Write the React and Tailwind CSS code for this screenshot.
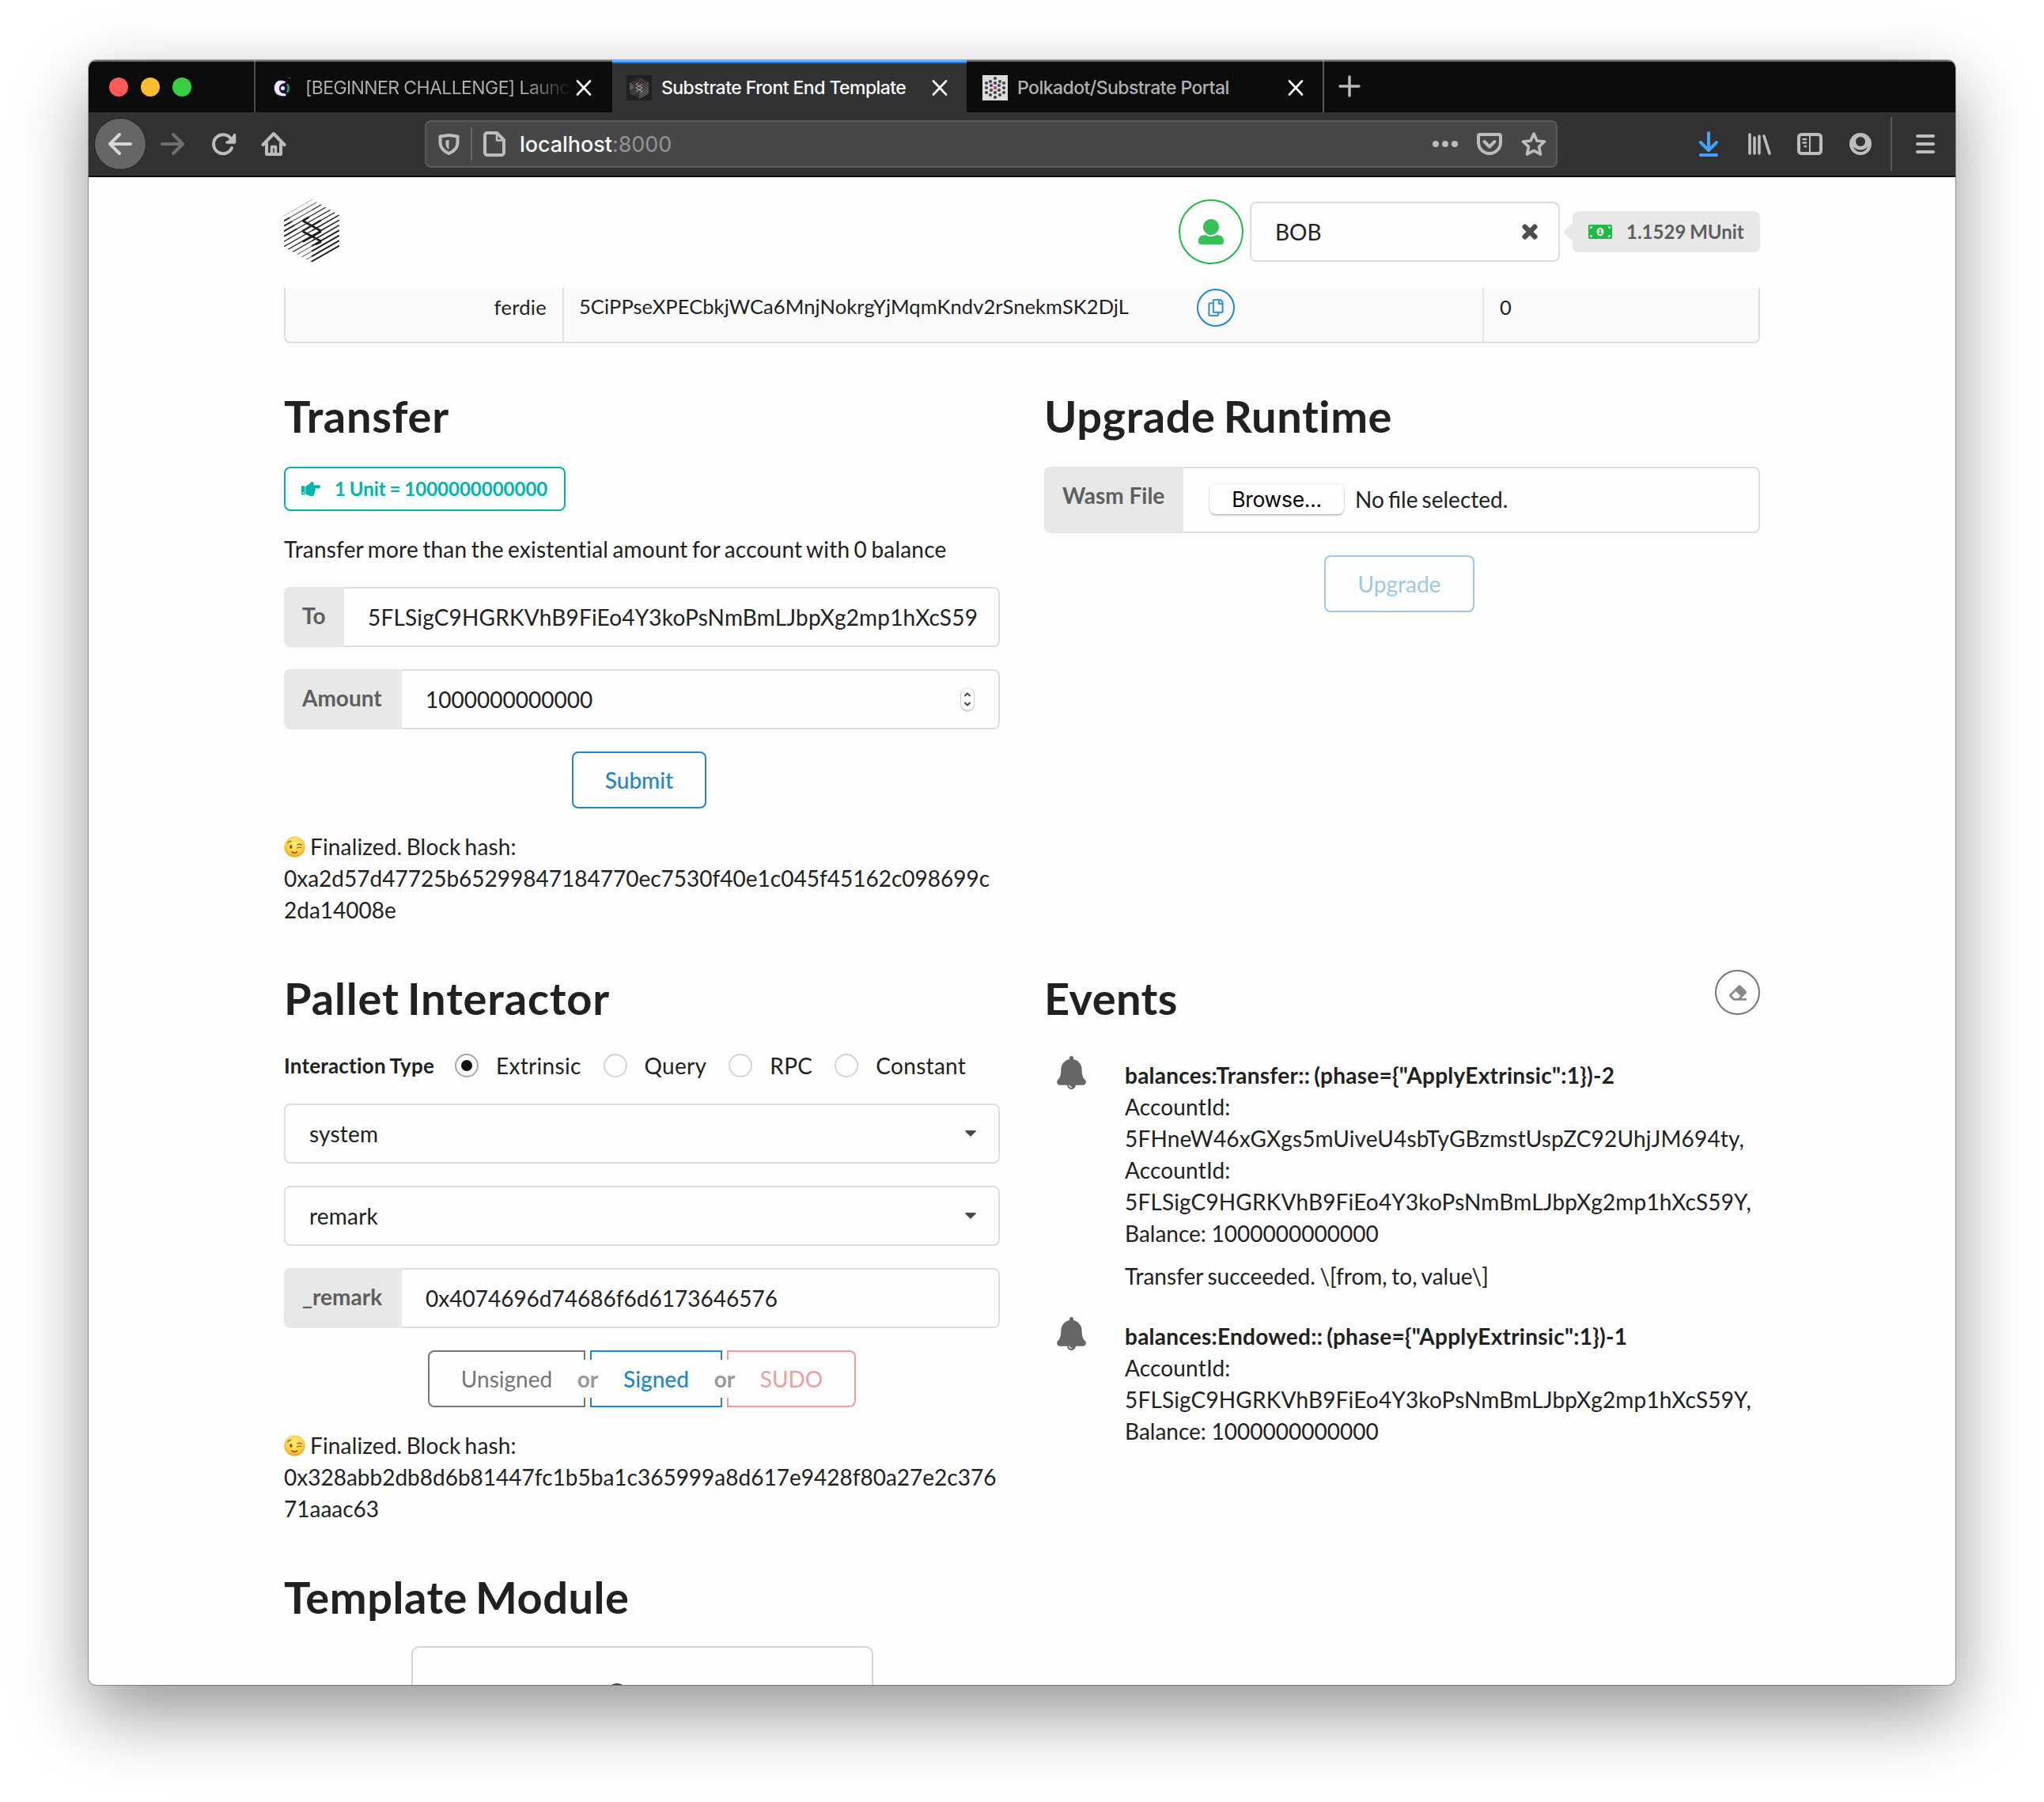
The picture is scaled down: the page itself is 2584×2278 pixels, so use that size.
import React from "react";
import { FaTimes, FaMoneyBillAlt, FaRegCopy, FaHandPointRight, FaEraser } from "react-icons/fa";

const HATCH = Array.from({ length: 13 }, (_, k) => 20.7 + k * 6.5);

function SubstrateMark({ id, color = "#1e1e1e", className }) {
  return (
    <svg viewBox="0 0 70 80" className={className}>
      <defs>
        <clipPath id={id}>
          <path d="M35 0 70 20V60L35 80 0 60V20Z" />
        </clipPath>
      </defs>
      <g clipPath={"url(#" + id + ")"} stroke={color}>
        {HATCH.map((c, k) => (
          <g key={k}>
            <path
              d={"M0 " + c + "L35 " + (c - 20)}
              strokeWidth={k === 0 ? 0.7 : 1.2}
              opacity={k === 0 ? 0.5 : k < 3 ? 0.7 : k > 8 ? 0.6 : 1}
            />
            <path
              d={"M35 " + (c - 20) + "L70 " + (c - 40)}
              strokeWidth={k > 8 ? 2 : k > 5 ? 1.6 : 1.2}
              opacity={k < 2 ? 0.6 : 1}
            />
            {k > 0 && k < 5 && (
              <path d={"M0 " + c + "L" + (4 + k * 3) + " " + (c - (4 + k * 3) * 0.571)} strokeWidth="1.8" />
            )}
          </g>
        ))}
      </g>
      <g fill="none" stroke={color} strokeWidth="2.6" strokeLinecap="round" strokeLinejoin="round">
        <path d="M30.500 23.200 24.500 26.500V27.500L46 39.500V41L24.500 53" />
        <path d="M46 27 24.500 39.500V41L46 52.500V54L40.500 56.700" />
      </g>
    </svg>
  );
}

function CloseX() {
  return (
    <svg viewBox="0 0 20 20" className="h-5 w-5 shrink-0" stroke="#fff" strokeWidth="2.6" strokeLinecap="round">
      <path d="M2 1.500 18 18.500M18 1.500 2 18.500" />
    </svg>
  );
}

function PolkadotFavicon() {
  const dots = [
    [16, 4], [10, 8], [22, 8], [16, 10], [5, 10], [27, 10], [11, 13], [21, 13], [5, 16], [27, 16],
    [11, 19], [21, 19], [16, 22], [5, 22], [27, 22], [10, 25], [22, 25], [16, 28],
  ];
  return (
    <svg viewBox="0 0 32 32" className="h-8 w-8 shrink-0">
      <rect width="32" height="32" fill="#dcdcdc" />
      {dots.map(([x, y]) => (
        <circle key={x + "-" + y} cx={x} cy={y} r="2.100" fill="#444" />
      ))}
      <circle cx="16" cy="16" r="2.200" fill="#d6339a" />
    </svg>
  );
}

function TabBar() {
  return (
    <div className="relative flex h-[66px] bg-[#0c0c0d] font-['Inter',sans-serif] text-[23px] font-medium tracking-[-0.55px]">
      <span className="absolute inset-x-0 top-0 h-[2px] bg-white/40" />
      <div className="flex w-[211px] items-center gap-4 border-r-2 border-[#4a4a4b] pl-[26px] pt-[1px]">
        <span className="h-6 w-6 rounded-full bg-[#ff5a57]" />
        <span className="h-6 w-6 rounded-full bg-[#ffbe30]" />
        <span className="h-6 w-6 rounded-full bg-[#36d042]" />
      </div>
      <div className="flex w-[451px] items-center justify-between pl-[20px] pr-[26px] pt-1">
        <div className="flex items-center">
          <svg viewBox="0 0 26 28" className="mr-[17px] h-7 w-[26px] shrink-0">
            <path d="M12 4C6 4 3 9 3 14.500S7 25 13 25h6v-4l-5-1a5.500 5.500 0 0 1-3-5.500c0-3 2-5 5-5.500l4-2c-2-2-4-3-8-3Z" fill="#ececf2" stroke="#1d1048" strokeWidth="1.500" />
            <circle cx="14.500" cy="14.500" r="3.500" fill="#ececf2" stroke="#251155" strokeWidth="2" />
            <path d="M20 9c2 3.500 2 7.500 0 11" fill="none" stroke="#17a67c" strokeWidth="2.500" />
            <circle cx="23" cy="1.500" r=".8" fill="#17a67c" />
          </svg>
          <span className="whitespace-nowrap bg-linear-to-r from-[#b1b1b3] from-83% to-[#161617] bg-clip-text font-normal tracking-[-0.6px] text-transparent">
            [BEGINNER CHALLENGE] Launc
          </span>
        </div>
        <CloseX />
      </div>
      <div className="flex w-[448px] items-center border-t-4 border-[#0a84ff] bg-[#323234] pl-[18px] pr-6 text-[#f9f9fa]">
        <div className="mr-3 h-8 w-8 shrink-0 bg-[#231f20] p-[2px]">
          <SubstrateMark id="mark-tab" color="#b8b8b8" className="h-7 w-7" />
        </div>
        <div className="flex-1 whitespace-nowrap">Substrate Front End Template</div>
        <CloseX />
      </div>
      <div className="flex w-[452px] items-center border-r-2 border-[#5a5a5b] pl-5 pr-6 pt-1 text-[#b1b1b3]">
        <PolkadotFavicon />
        <div className="ml-3 flex-1 whitespace-nowrap">Polkadot/Substrate Portal</div>
        <CloseX />
      </div>
      <svg viewBox="0 0 28 28" className="ml-[18px] mt-[19px] h-7 w-7" stroke="#b8b8ba" strokeWidth="3.500" strokeLinecap="round">
        <path d="M14 2v24M2 14h24" />
      </svg>
    </div>
  );
}

function Ico({ className = "", children }) {
  return (
    <svg
      viewBox="0 0 32 32"
      fill="none"
      stroke="#bdbdbe"
      strokeWidth="4"
      strokeLinecap="round"
      strokeLinejoin="round"
      className={"h-8 w-8 shrink-0 " + className}
    >
      {children}
    </svg>
  );
}

function ToolBar() {
  return (
    <div className="flex h-[82px] items-center border-b-2 border-[#0c0c0d] bg-[#323234] pl-2">
      <div className="flex h-16 w-16 items-center justify-center rounded-full bg-[#666667] ring-1 ring-[#252526]">
        <Ico>
          <path d="M29 16H3M15 4 3 16 15 28" stroke="#d6d6d7" />
        </Ico>
      </div>
      <Ico className="ml-[18px]">
        <path d="M3 16H29M17 4 29 16 17 28" stroke="#6f6f70" />
      </Ico>
      <Ico className="ml-[33px]">
        <path d="M25 9.500A12 12 0 1 0 26 21" />
        <path d="M29 4V15H18Z" fill="#bdbdbe" stroke="none" />
        <path d="M29.500 4.500V14H20" strokeWidth="3.500" />
      </Ico>
      <Ico className="ml-[31px]">
        <path d="M2.500 17 16 3 29.500 17" />
        <path d="M7 15V29H25V15" />
        <path d="M13.500 28V19.500H18.500V28" strokeWidth="3.500" />
      </Ico>
      <div className="ml-[175px] flex h-[60px] w-[1432px] items-center rounded-lg border-2 border-[#5a5a5c] bg-[#474749] pl-[13px] pr-3">
        <Ico>
          <path d="M4.500 6.500C8 6 12 5 15.500 5s7.500 1 11 1.500V14c0 7-4 11-11 14-7-3-11-7-11-14Z" />
          <path d="M15.500 11v12c-3-1.500-4-4.500-4-7.500v-4Z" fill="#bdbdbe" stroke="none" />
        </Ico>
        <span className="ml-[11px] h-[42px] w-[2px] bg-[#65666c]" />
        <Ico className="ml-[13px]">
          <path d="M6 2H18L27 11V27a3 3 0 0 1-3 3H6a3 3 0 0 1-3-3V5a3 3 0 0 1 3-3Z" />
          <path d="M18 3v8.500h8" strokeWidth="2.500" />
        </Ico>
        <div className="ml-[15px] flex-1 pt-[2px] font-['Inter',sans-serif] text-[27px] font-medium tracking-[-0.05px] text-[#f9f9fa]">
          localhost<span className="font-normal text-[#949495]">:8000</span>
        </div>
        <Ico>
          <g fill="#bdbdbe" stroke="none">
            <circle cx="4" cy="16" r="4" />
            <circle cx="16" cy="16" r="4" />
            <circle cx="28" cy="16" r="4" />
          </g>
        </Ico>
        <Ico className="ml-6">
          <path d="M4 4H28a2 2 0 0 1 2 2V14a14 14 0 0 1-28 0V6a2 2 0 0 1 2-2Z" />
          <path d="M9.500 13 16 19.500 22.500 13" />
        </Ico>
        <Ico className="ml-6">
          <path d="m16 3 4 9 9.500 1-7 6.500 2 9.500L16 24.300 7.500 29l2-9.500-7-6.500 9.500-1Z" strokeWidth="3.600" />
        </Ico>
      </div>
      <Ico className="ml-[175px]">
        <g stroke="#45a1ff">
          <path d="M16 2V23M6 14 16 24 26 14M6 30H26" />
        </g>
      </Ico>
      <Ico className="ml-8">
        <path d="M4 4V28M10 8V28M16 6V28M22 6 29 28" strokeWidth="3.600" />
      </Ico>
      <Ico className="ml-8">
        <rect x="2" y="4" width="28" height="24" rx="3.500" />
        <path d="M16 4V28" strokeWidth="2" />
        <path d="M7.500 10H11M7.500 14.500H11M9.500 19H11" strokeWidth="2.400" />
      </Ico>
      <Ico className="ml-8">
        <circle cx="16" cy="16" r="14" fill="#bdbdbe" stroke="none" />
        <circle cx="16" cy="13" r="6" fill="#323234" stroke="none" />
        <path d="M7 19.500C9 25 13 26 16 26s7-1 9-6.500C22 22.500 19 23.500 16 23.500s-6-1-9-4Z" fill="#323234" stroke="none" />
      </Ico>
      <span className="ml-[22px] h-[68px] w-[2px] bg-[#59595a]" />
      <Ico className="ml-[26px]">
        <path d="M6 6H26M6 16H26M6 26H26" />
      </Ico>
    </div>
  );
}

function PageHeader() {
  return (
    <header className="flex h-[140px] items-start justify-between pt-7">
      <SubstrateMark id="mark-header" className="h-20 w-[70px]" />
      <div className="flex items-center">
        <span className="flex h-[82px] w-[82px] items-center justify-center rounded-full border-[2.5px] border-[#21ba45]">
          <svg viewBox="0 0 512 512" className="h-8 w-8 fill-[#37c058]">
            <path d="M256 0c88.366 0 160 71.634 160 160s-71.634 160-160 160S96 248.366 96 160 167.634 0 256 0zm183.283 333.821l-71.313-17.828c-74.923 53.890-165.738 41.864-223.940 0l-71.313 17.828C29.981 344.505 0 382.903 0 426.955V464c0 26.510 21.490 48 48 48h416c26.510 0 48-21.490 48-48v-37.045c0-44.052-29.981-82.450-72.717-93.134z" />
          </svg>
        </span>
        <div className="ml-2 flex h-[76px] w-[392px] items-center justify-between rounded-lg border-2 border-[#dededf] pl-[30px] pr-[23px]">
          <span>BOB</span>
          <FaTimes className="h-[26px] w-[26px] overflow-visible text-[#4c4c4c]" stroke="#4c4c4c" strokeWidth="30" />
        </div>
        <div className="relative ml-4 flex h-[52px] w-[237px] items-center rounded-lg bg-[#e8e8e8] pl-5 text-[24px] font-bold text-[#5e5e5e]">
          <span className="absolute -left-[8px] top-[17.500px] h-[17px] w-[17px] rotate-45 bg-[#e8e8e8]" />
          <FaMoneyBillAlt className="relative h-6 w-[30px] text-[#21ba45]" />
          <span className="ml-[18px] whitespace-nowrap [word-spacing:-1px]">1.1529 MUnit</span>
        </div>
      </div>
    </header>
  );
}

function BalanceRow() {
  return (
    <div className="flex h-[70px] rounded-b-lg border-x-2 border-b-2 border-[#dededf] bg-[#fafafb] text-[25.500px]">
      <div className="w-[352px] border-r-2 border-[#e2e2e3] pr-5 pt-[4px] text-right tracking-[0.3px]">ferdie</div>
      <div className="flex w-[1163px] border-r-2 border-[#e2e2e3] pl-[19px] pt-[1px]">
        <span className="w-[781px] pt-[2px] tracking-[0.080px]">5CiPPseXPECbkjWCa6MnjNokrgYjMqmKndv2rSnekmSK2DjL</span>
        <span className="flex h-12 w-12 items-center justify-center rounded-full border-2 border-[#2185d0]">
          <FaRegCopy className="h-[22px] w-[20px] text-[#3b93d8]" />
        </span>
      </div>
      <div className="pl-[20px] pt-[4px]">0</div>
    </div>
  );
}

function Heading({ children, tracking }) {
  return (
    <h1 className={"whitespace-nowrap text-[56px] font-bold leading-[72px] [word-spacing:-4px] " + tracking}>
      {children}
    </h1>
  );
}

function LabeledField({ label, labelWidth, tall, children }) {
  return (
    <div className={"mt-7 flex " + (tall ? "h-[84px]" : "h-[76px]")}>
      <div className={"shrink-0 rounded-l-lg bg-[#e8e8e8] pl-[23px] pt-[16px] font-bold text-[#5e5e5e] " + labelWidth}>
        {label}
      </div>
      <div className={"flex flex-1 items-center rounded-r-lg border-2 border-l-0 border-[#dededf] pl-[30px] " + (tall ? "pb-[3px]" : "")}>
        {children}
      </div>
    </div>
  );
}

function Select({ value }) {
  return (
    <div className="mt-7 flex h-[76px] items-center justify-between rounded-lg border-2 border-[#dededf] pl-[30px] pr-[28px]">
      <span className="tracking-[0.2px]">{value}</span>
      <svg viewBox="0 0 14 8" className="h-2 w-[14px] fill-[#4a4a4a]">
        <path d="M1 0H13L14 1 7 8 0 1Z" />
      </svg>
    </div>
  );
}

function Wink() {
  return (
    <svg viewBox="0 0 26 26" className="mr-[6px] inline-block h-[27px] w-[27px] align-[-3px]">
      <defs>
        <radialGradient id="face" cx=".5" cy=".35" r=".65">
          <stop offset="0" stopColor="#fff07a" />
          <stop offset=".65" stopColor="#fdd043" />
          <stop offset="1" stopColor="#f0a125" />
        </radialGradient>
      </defs>
      <circle cx="13" cy="13" r="12.700" fill="url(#face)" />
      <ellipse cx="8.500" cy="13" rx="1.500" ry="2.100" fill="#7a4a12" />
      <path d="M4.500 8.500c1-2 2.500-2.500 4-2.300M16 10.500c2-1 4-.8 5.500.3M16 14.500c1.500-1.200 3.500-1.200 5-.3" fill="none" stroke="#8a5614" strokeWidth="1.100" strokeLinecap="round" />
      <path d="M9.500 19c2 2 5 2 6.500 0" fill="none" stroke="#7a4a12" strokeWidth="1.300" strokeLinecap="round" />
    </svg>
  );
}

function Status({ lines }) {
  return (
    <div className="mt-7 whitespace-nowrap">
      <div className="h-10 tracking-[0.15px] [word-spacing:-2px]">
        <Wink />
        Finalized. Block hash:
      </div>
      {lines.map((l) => (
        <div key={l}>{l}</div>
      ))}
    </div>
  );
}

function Transfer() {
  return (
    <section>
      <Heading tracking="tracking-[0.700px]">Transfer</Heading>
      <div className="mt-7 flex h-14 w-[356px] items-center rounded-lg border-2 border-[#00b5ad] pl-5 text-[24px] font-bold text-[#00b5ad]">
        <FaHandPointRight className="h-6 w-6" />
        <span className="ml-[18px] whitespace-nowrap [word-spacing:-1px]">1 Unit = 1000000000000</span>
      </div>
      <p className="mt-7 tracking-[0.2px] [word-spacing:-2px]">
        Transfer more than the existential amount for account with 0 balance
      </p>
      <LabeledField label="To" labelWidth="w-[76px]">
        <span className="tracking-[0.18px]">5FLSigC9HGRKVhB9FiEo4Y3koPsNmBmLJbpXg2mp1hXcS59</span>
      </LabeledField>
      <LabeledField label="Amount" labelWidth="w-[149px]">
        <span className="flex-1">1000000000000</span>
        <svg viewBox="0 0 16 28" className="mr-[31px] h-7 w-4 rounded-full bg-white shadow-[0_1px_2px_rgba(0,0,0,.25),0_0_0_1px_rgba(0,0,0,.12)]" fill="none" stroke="#444" strokeWidth="2" strokeLinecap="round" strokeLinejoin="round">
          <path d="M5 9.500 8 6.500l3 3M5 18.500 8 21.500l3-3" />
        </svg>
      </LabeledField>
      <div className="mt-7 flex justify-center pr-[7px]">
        <button className="h-[72px] w-[170px] rounded-lg border-2 border-[#2185d0] font-medium text-[#2185d0]">Submit</button>
      </div>
      <Status lines={["0xa2d57d47725b65299847184770ec7530f40e1c045f45162c098699c", "2da14008e"]} />
    </section>
  );
}

function UpgradeRuntime() {
  return (
    <section>
      <Heading tracking="tracking-[0.550px]">Upgrade Runtime</Heading>
      <LabeledField label="Wasm File" labelWidth="w-[176px]" tall>
        <span className="ml-[3px] flex h-[38px] w-[170px] items-center justify-center rounded-lg bg-white font-['Inter',sans-serif] text-[26.500px] tracking-[-0.3px] text-black shadow-[0_2px_2px_rgba(0,0,0,.2),0_0_0_1px_rgba(0,0,0,.08)]">
          Browse...
        </span>
        <span className="ml-[14px] [word-spacing:-2px]">No file selected.</span>
      </LabeledField>
      <div className="mt-7 flex justify-center pr-[7px]">
        <button className="h-[72px] w-[190px] rounded-lg border-2 border-[#9bc8ea] text-[#9bc8ea]">Upgrade</button>
      </div>
    </section>
  );
}

function Radio({ label, checked }) {
  return (
    <div className="mr-7 flex items-center">
      <span className={"flex h-[30px] w-[30px] items-center justify-center rounded-full border-2 " + (checked ? "border-[#a8a8a8]" : "border-[#d4d4d5]")}>
        {checked && <span className="h-[14px] w-[14px] rounded-full bg-[#111]" />}
      </span>
      <span className="ml-[22px] tracking-[0.3px]">{label}</span>
    </div>
  );
}

function Or() {
  return (
    <div className="relative w-[6px] shrink-0">
      <span className="absolute -left-[21px] top-3 flex h-12 w-12 items-center justify-center rounded-full font-bold text-[#999]">
        <span className="absolute left-[10px] h-12 w-7 bg-[#fefefe]" />
        <span className="relative">or</span>
      </span>
    </div>
  );
}

function PalletInteractor() {
  return (
    <section>
      <Heading tracking="tracking-[0.850px]">Pallet Interactor</Heading>
      <div className="mt-7 flex h-[41px] items-center whitespace-nowrap">
        <span className="w-[216px] text-[26px] font-bold tracking-[0.2px] [word-spacing:-1px]">Interaction Type</span>
        <Radio label="Extrinsic" checked />
        <Radio label="Query" />
        <Radio label="RPC" />
        <Radio label="Constant" />
      </div>
      <Select value="system" />
      <Select value="remark" />
      <LabeledField label="_remark" labelWidth="w-[149px]">
        0x4074696d74686f6d6173646576
      </LabeledField>
      <div className="mt-7 flex h-[72px] justify-center">
        <button className="w-[199px] rounded-l-lg border-2 border-[#767676] text-[#767676]">Unsigned</button>
        <Or />
        <button className="w-[167px] border-2 border-[#2185d0] font-medium text-[#2185d0]">Signed</button>
        <Or />
        <button className="w-[163px] rounded-r-lg border-2 border-[#f09c9c] text-[#f09c9c]">SUDO</button>
      </div>
      <Status lines={["0x328abb2db8d6b81447fc1b5ba1c365999a8d617e9428f80a27e2c376", "71aaac63"]} />
    </section>
  );
}

const EVENTS = [
  {
    title: 'balances:Transfer:: (phase={"ApplyExtrinsic":1})-2',
    lines: [
      "AccountId:",
      "5FHneW46xGXgs5mUiveU4sbTyGBzmstUspZC92UhjJM694ty,",
      "AccountId:",
      "5FLSigC9HGRKVhB9FiEo4Y3koPsNmBmLJbpXg2mp1hXcS59Y,",
    ],
    balance: "Balance: 1000000000000",
    note: "Transfer succeeded. \\[from, to, value\\]",
  },
  {
    title: 'balances:Endowed:: (phase={"ApplyExtrinsic":1})-1',
    lines: ["AccountId:", "5FLSigC9HGRKVhB9FiEo4Y3koPsNmBmLJbpXg2mp1hXcS59Y,"],
    balance: "Balance: 1000000000000",
  },
];

function Events() {
  return (
    <section>
      <div className="flex justify-between">
        <Heading tracking="tracking-[0.400px]">Events</Heading>
        <span className="flex h-[57px] w-[57px] items-center justify-center rounded-full border-2 border-[#767676]">
          <FaEraser className="h-[22px] w-[22px] text-[#888]" />
        </span>
      </div>
      <div className="mt-[41px] flex flex-col gap-9">
        {EVENTS.map((e) => (
          <div key={e.title} className="flex">
            <svg viewBox="0 0 448 512" className="-mt-[4px] ml-4 mr-[49px] h-[42px] w-[37px] shrink-0 fill-[#666]">
              <path d="M433.884 366.059C411.634 343.809 384 316.118 384 208c0-79.394-57.831-145.269-133.663-157.830A31.845 31.845 0 0 0 256 32c0-17.673-14.327-32-32-32s-32 14.327-32 32c0 6.750 2.095 13.008 5.663 18.170C121.831 62.731 64 128.606 64 208c0 108.118-27.643 135.809-49.893 158.059C-16.042 396.208 5.325 448 48.048 448H160c0 35.346 28.654 64 64 64s64-28.654 64-64h111.943c42.638 0 64.151-51.731 33.941-81.941zM224 472a8 8 0 0 1 0 16c-22.056 0-40-17.944-40-40h16c0 13.234 10.766 24 24 24z" />
            </svg>
            <div className="whitespace-nowrap">
              <div className="font-bold tracking-[0.25px] [word-spacing:-2px]">{e.title}</div>
              {e.lines.map((l, i) => (
                <div key={i} className="tracking-[0.16px]">{l}</div>
              ))}
              <div className="[word-spacing:-0.5px]">{e.balance}</div>
              {e.note && <div className="mt-[14px] [word-spacing:-1.5px]">{e.note}</div>}
            </div>
          </div>
        ))}
      </div>
    </section>
  );
}

function TemplateModule() {
  return (
    <section>
      <Heading tracking="tracking-[0.500px]">Template Module</Heading>
      <div className="mx-auto mt-7 flex h-[320px] w-[580px] justify-center rounded-lg pr-[64px] pt-[45px] shadow-[0_0_0_2px_#d4d4d5]">
        <span className="h-10 w-7 rounded-full border-4 border-[#444]" />
      </div>
    </section>
  );
}

export default function App() {
  return (
    <div className="h-[2278px] w-[2584px] overflow-hidden bg-white px-[112px] pt-[76px]">
      <div className="h-[2054px] w-[2360px] rounded-[10px] shadow-[0_0_0_1px_rgba(0,0,0,.3),0_36px_90px_rgba(0,0,0,.42)]">
        <div className="h-full overflow-hidden rounded-[10px] bg-[#fefefe]">
          <TabBar />
          <ToolBar />
          <main className="mx-auto w-[1866px] font-['Lato',sans-serif] text-[28px] leading-10 text-[#212121]">
            <PageHeader />
            <BalanceRow />
            <div className="mt-14 grid grid-cols-[905px_905px] gap-14">
              <Transfer />
              <UpgradeRuntime />
              <PalletInteractor />
              <Events />
              <TemplateModule />
            </div>
          </main>
        </div>
      </div>
    </div>
  );
}
